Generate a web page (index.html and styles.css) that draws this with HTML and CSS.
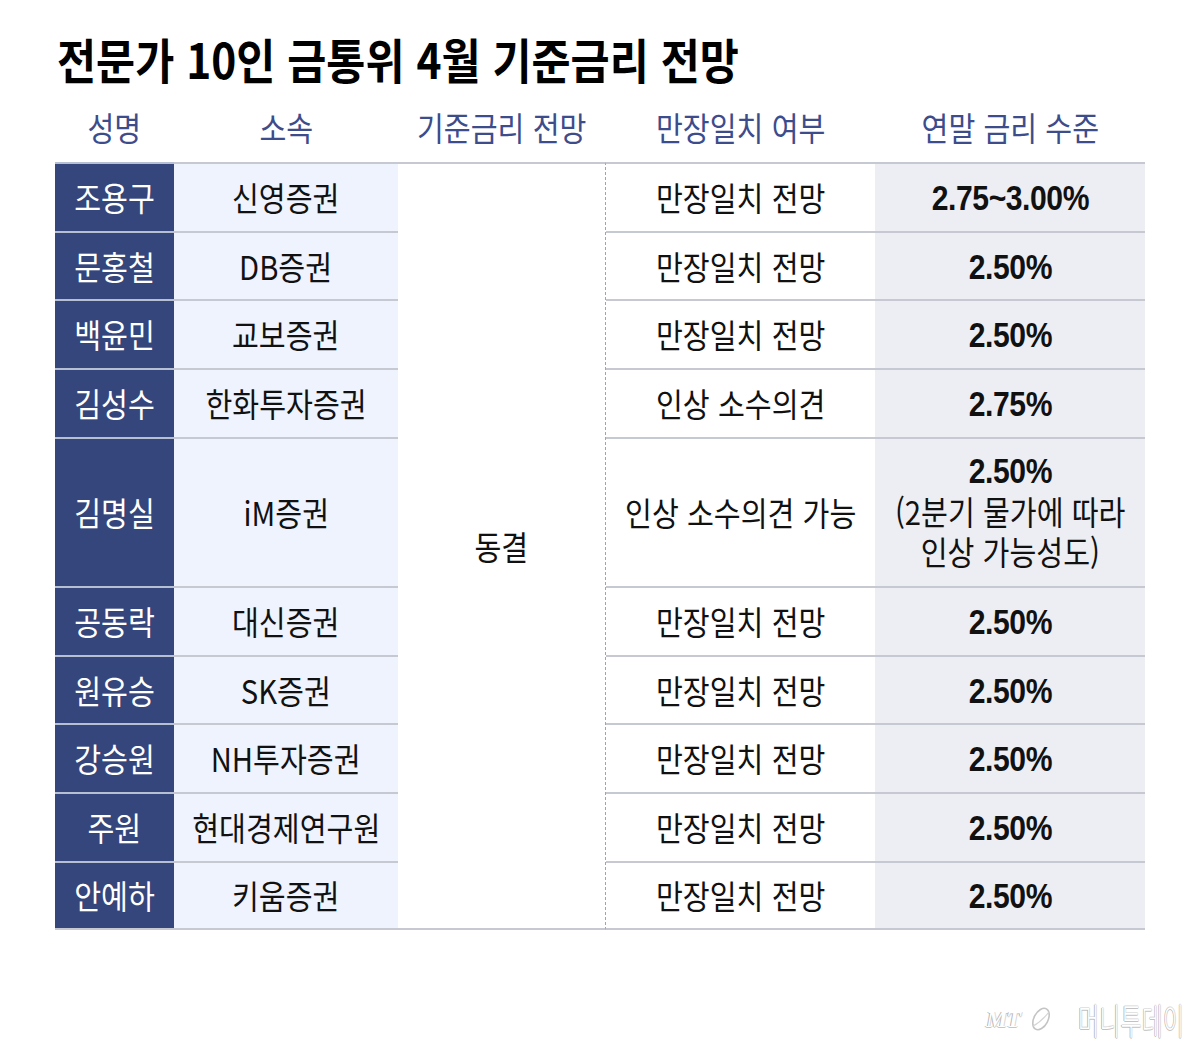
FILE: index.html
```html
<!DOCTYPE html>
<html lang="ko">
<head>
<meta charset="utf-8">
<title>전문가 10인 금통위 4월 기준금리 전망</title>
<link rel="stylesheet" href="styles.css">
</head>
<body>
<div class="page">
  <h1 class="title"><span class="sx">전문가 10인 금통위 4월 기준금리 전망</span></h1>

  <div class="head">
    <div class="hc"><span class="sx">성명</span></div>
    <div class="hc"><span class="sx">소속</span></div>
    <div class="hc"><span class="sx">기준금리 전망</span></div>
    <div class="hc"><span class="sx">만장일치 여부</span></div>
    <div class="hc"><span class="sx">연말 금리 수준</span></div>
  </div>

  <div class="grid">
    <div class="cell freeze"><span class="sx">동결</span></div>

    <div class="cell name"><span class="sx">조용구</span></div>
    <div class="cell org"><span class="sx">신영증권</span></div>
    <div class="cell vote"><span class="sx">만장일치 전망</span></div>
    <div class="cell rate"><span class="num">2.75~3.00%</span></div>

    <div class="cell name"><span class="sx">문홍철</span></div>
    <div class="cell org"><span class="sx">DB증권</span></div>
    <div class="cell vote"><span class="sx">만장일치 전망</span></div>
    <div class="cell rate"><span class="num">2.50%</span></div>

    <div class="cell name"><span class="sx">백윤민</span></div>
    <div class="cell org"><span class="sx">교보증권</span></div>
    <div class="cell vote"><span class="sx">만장일치 전망</span></div>
    <div class="cell rate"><span class="num">2.50%</span></div>

    <div class="cell name"><span class="sx">김성수</span></div>
    <div class="cell org"><span class="sx">한화투자증권</span></div>
    <div class="cell vote"><span class="sx">인상 소수의견</span></div>
    <div class="cell rate"><span class="num">2.75%</span></div>

    <div class="cell name"><span class="sx">김명실</span></div>
    <div class="cell org"><span class="sx">iM증권</span></div>
    <div class="cell vote"><span class="sx">인상 소수의견 가능</span></div>
    <div class="cell rate">
      <div class="multi">
        <div class="ln"><span class="num">2.50%</span></div>
        <div class="ln"><span class="sx">(2분기 물가에 따라</span></div>
        <div class="ln"><span class="sx">인상 가능성도)</span></div>
      </div>
    </div>

    <div class="cell name"><span class="sx">공동락</span></div>
    <div class="cell org"><span class="sx">대신증권</span></div>
    <div class="cell vote"><span class="sx">만장일치 전망</span></div>
    <div class="cell rate"><span class="num">2.50%</span></div>

    <div class="cell name"><span class="sx">원유승</span></div>
    <div class="cell org"><span class="sx">SK증권</span></div>
    <div class="cell vote"><span class="sx">만장일치 전망</span></div>
    <div class="cell rate"><span class="num">2.50%</span></div>

    <div class="cell name"><span class="sx">강승원</span></div>
    <div class="cell org"><span class="sx">NH투자증권</span></div>
    <div class="cell vote"><span class="sx">만장일치 전망</span></div>
    <div class="cell rate"><span class="num">2.50%</span></div>

    <div class="cell name"><span class="sx">주원</span></div>
    <div class="cell org"><span class="sx">현대경제연구원</span></div>
    <div class="cell vote"><span class="sx">만장일치 전망</span></div>
    <div class="cell rate"><span class="num">2.50%</span></div>

    <div class="cell name last"><span class="sx">안예하</span></div>
    <div class="cell org last"><span class="sx">키움증권</span></div>
    <div class="cell vote last"><span class="sx">만장일치 전망</span></div>
    <div class="cell rate last"><span class="num">2.50%</span></div>
  </div>

  <div class="footer">
    <div class="logo">
      <span class="mt">MT</span>
      <svg class="mark" width="26" height="28" viewBox="0 0 26 28" aria-hidden="true">
        <ellipse cx="13" cy="14" rx="7" ry="11.5" transform="rotate(28 13 14)" fill="none" stroke="#c4c4c4" stroke-width="1.6"/>
        <path d="M5 21 Q13 17 21 7" fill="none" stroke="#d4d4d4" stroke-width="1.2"/>
      </svg>
      <span class="brand"><span class="brand-t">머니투데이</span></span>
    </div>
  </div>
</div>
</body>
</html>
```

FILE: styles.css
```css
* { box-sizing: border-box; }

html, body {
  margin: 0;
  padding: 0;
  background: #ffffff;
}

body {
  font-family: "Noto Sans CJK KR", "Noto Sans", sans-serif;
  color: #111111;
}

.page {
  width: 1201px;
  height: 1047px;
  padding: 0 56px 0 55px;
  display: flex;
  flex-direction: column;
}

.sx {
  display: inline-block;
  white-space: nowrap;
  transform: scaleX(0.885);
}

.title {
  margin: 28px 0 0 2px;
  font-size: 48px;
  line-height: 60px;
  font-weight: 700;
  color: #000000;
  letter-spacing: 0;
}

.title .sx {
  transform: scaleX(0.885);
  transform-origin: left center;
}

.head {
  margin-top: 9px;
  display: grid;
  grid-template-columns: 119px 224px 208px 269px 270px;
  height: 60px;
}

.hc {
  display: flex;
  align-items: center;
  justify-content: center;
  font-size: 33px;
  line-height: 1;
  color: #3d4c8b;
}

.grid {
  margin-top: 5px;
  display: grid;
  grid-template-columns: 119px 224px 208px 269px 270px;
  grid-template-rows: 69px 68px 69px 69px 149px 69px 68px 69px 69px 69px;
}

.cell {
  display: flex;
  align-items: center;
  justify-content: center;
  border-top: 2px solid #c6c9d1;
  font-size: 33px;
  line-height: 1;
  color: #111111;
  text-align: center;
}

.cell.last {
  border-bottom: 2px solid #c6c9d1;
}

.name {
  background: #34467b;
  color: #ffffff;
  border-top-color: #b7bfd3;
}

.name.last {
  border-bottom-color: #c6c9d1;
}

.org {
  background: #eef3fd;
}

.freeze {
  grid-column: 3;
  grid-row: 1 / span 10;
  background: #ffffff;
  border-bottom: 2px solid #c6c9d1;
  border-right: 1px dashed #a4a4a4;
}

.vote {
  background: #ffffff;
}

.rate {
  background: #eceef4;
}

.num {
  display: inline-block;
  white-space: nowrap;
  font-family: "Liberation Sans", Arial, sans-serif;
  font-weight: 700;
  font-size: 35px;
  letter-spacing: -0.5px;
  transform: scaleX(0.86);
  color: #111111;
}

.multi {
  display: flex;
  flex-direction: column;
  align-items: center;
  margin-top: -4px;
}

.ln {
  height: 40px;
  display: flex;
  align-items: center;
  justify-content: center;
  line-height: 34px;
}

.footer {
  margin-top: 72px;
  display: flex;
  justify-content: flex-end;
  margin-right: -43px;
}

.logo {
  display: flex;
  align-items: center;
  height: 34px;
}

.mt {
  font-family: "Liberation Serif", serif;
  font-style: italic;
  font-weight: 700;
  font-size: 24px;
  color: #ffffff;
  text-shadow: -1px 0 0 #b5b5b5, 0 1px 0 #c6c6c6, 1px 0 0 #dddddd;
  letter-spacing: -1px;
}

.mark {
  display: block;
  margin: 0 24px 0 8px;
}

.brand {
  display: block;
  width: 110px;
  height: 34px;
}

.brand-t {
  display: inline-block;
  white-space: nowrap;
  font-size: 36px;
  font-weight: 300;
  line-height: 34px;
  color: #ffffff;
  text-shadow: -1px 0 0 #adadad, 0 1px 0 #c2c2c2, 1px 0 0 #dadada, 0 -1px 0 #e2e2e2;
  transform: scaleX(0.64);
  transform-origin: left center;
}
```
